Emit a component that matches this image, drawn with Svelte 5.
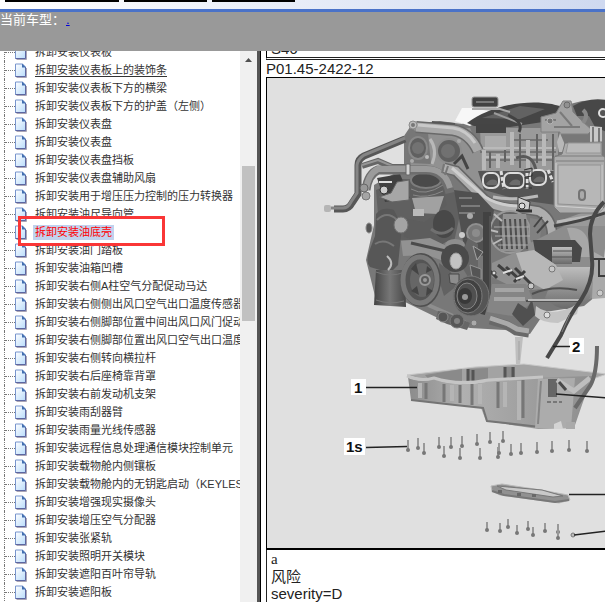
<script>
  const prefix = '拆卸安装';
  const items = [
    '仪表板', '仪表板上的装饰条', '仪表板下方的横梁', '仪表板下方的护盖（左侧）',
    '仪表盘', '仪表盘', '仪表盘挡板', '仪表盘辅助风扇', '用于增压压力控制的压力转换器',
    '油尺导向管', '油底壳', '油门踏板', '油箱凹槽', '右侧A柱空气分配促动马达',
    '右侧侧出风口空气出口温度传感器', '右侧脚部位置中间出风口风门促动马达',
    '右侧脚部位置出风口空气出口温度传感器', '右侧转向横拉杆', '右后座椅靠背罩',
    '右前发动机支架', '雨刮器臂', '雨量光线传感器', '远程信息处理通信模块控制单元',
    '载物舱内侧镶板', '载物舱内的无钥匙启动（KEYLESS-GO）', '增强现实摄像头',
    '增压空气分配器', '张紧轨', '照明开关模块', '遮阳百叶帘导轨', '遮阳板'
  ];
  const hovered = 1;
  const selected = 10;

  const panBolts = [
    [408, 450], [418, 448], [424, 453], [439, 447], [444, 456], [451, 447], [460, 458],
    [462, 446], [477, 444], [480, 458], [490, 442], [498, 457], [503, 441], [499, 453],
    [511, 454], [521, 453], [537, 452], [552, 451], [569, 450], [587, 451]
  ];
  const coverBolts = [
    [487, 530], [500, 531], [508, 527], [517, 533], [528, 529], [533, 535], [545, 531], [558, 532], [558, 538]
  ];
  const ports = [[491, 181, 8], [514, 181, 10], [538, 178, 8]];
  const fins = [500, 505, 510, 515, 520, 525];
</script>

<div class="page">
  <nav class="strip" aria-label="主菜单">
    <a class="tab first" href="#home" aria-label="首页"></a>
    <a class="tab second" href="#data" aria-label="资料"></a>
    <a class="tab third" href="#help" aria-label="帮助"></a>
  </nav>
  <header>当前车型：<a href="#model">.</a></header>

  <div class="body">
    <aside>
      <ul class="tree">
        {#each items as item, i}
          <li>
            <svg class="doc" viewBox="0 0 12 15" aria-hidden="true">
              <defs>
                <linearGradient id="paper" x1="0" y1="0" x2="1" y2="1">
                  <stop offset="0" stop-color="#fff" /><stop offset="1" stop-color="#b9dcfb" />
                </linearGradient>
              </defs>
              <path d="M1.5 14.5H11.5V5" fill="none" stroke="#aaa5b5" />
              <path d="M.5 1H7.5L10.5 4V13.5H.5Z" fill="url(#paper)" stroke="#7895cd" />
              <path d="M.5 13.5H10.5V4" fill="none" stroke="#5c67a2" />
              <path d="M7 .5L11 4.5H7Z" fill="#426eb0" />
            </svg>
            <a href="#doc-{i}" class:hovered={i === hovered} class:selected={i === selected}>{prefix}{item}</a>
          </li>
        {/each}
      </ul>
      <div class="scrollbar" aria-hidden="true">
        <svg viewBox="0 0 17 17"><path d="M5 11L8.500 7L12 11Z" fill="#505050" /></svg>
        <div class="thumb"></div>
      </div>
      <div class="marker"></div>
    </aside>

    <main>
      <div class="model"><span>S46</span></div>
      <h1>P01.45-2422-12</h1>
      <figure>
        <svg class="art" viewBox="267 78 340 470" role="img" aria-label="油底壳">
          <defs>
            <linearGradient id="metal" x1="0" y1="0" x2="0" y2="1">
              <stop offset="0" stop-color="#bdbdbd" /><stop offset="1" stop-color="#6a6a6a" />
            </linearGradient>
            <linearGradient id="dark" x1="0" y1="0" x2="1" y2="0">
              <stop offset="0" stop-color="#444" /><stop offset=".5" stop-color="#777" /><stop offset="1" stop-color="#484848" />
            </linearGradient>
            <linearGradient id="pan" x1="0" y1="0" x2="1" y2="0">
              <stop offset="0" stop-color="#8b8b8b" /><stop offset=".3" stop-color="#b0b0b0" /><stop offset="1" stop-color="#8e8e8e" />
            </linearGradient>
          </defs>

          <!-- block silhouette -->
          <path d="M404 136L412 124L440 121L462 124L482 112L535 103L562 106L582 101L607 100V200L600 260L596 296L584 306L545 312L530 334L505 330L470 328L442 320L405 302L376 300L366 260L374 225V185L404 168Z" fill="#787878" />
          <path d="M414 128H470L484 160V190L450 170H410Z" fill="#919191" />
          <path d="M480 128H558V175H482Z" fill="#9a9a9a" />
          <path d="M485 136H506V150H485Z" fill="#acacac" />
          <path d="M480 152H556M482 160H560M510 140H548" stroke="#747474" stroke-width="2" />
          <path d="M478 148H556M484 157H558" stroke="#bababa" stroke-width="2" />
          <path d="M484 150V170M498 154V168M512 132V165M528 140V168M544 134V166" stroke="#b9b9b9" stroke-width="4" />
          <path d="M490 152V168M505 150V162M520 134V168M537 134V163M553 134V170" stroke="#626262" stroke-width="2" />
          <path d="M516 158Q532 152 536 170" fill="none" stroke="#595959" stroke-width="3" />

          <!-- upper intake and oil filler -->
          <path d="M455 121L462 108L476 108L494 113L470 126Z" fill="#f7f7f7" />
          <path d="M467 123C490 106 525 99 552 104L565 108L556 120L510 127L474 126Z" fill="#454545" />
          <path d="M482 118L520 106L545 109L520 119Z" fill="#626262" />
          <path d="M494 113L522 124" stroke="#9b9b9b" stroke-width="2" />
          <rect x="472" y="97" width="26" height="10" rx="2" fill="#424242" stroke="#999" />
          <path d="M476 102H494" stroke="#777" stroke-width="2" />
          <path d="M472 109H500L510 112" stroke="#aaa" stroke-width="2" fill="none" />
          <path d="M476 124H506V133H476Z" fill="#444" />
          <path d="M508 115Q524 122 519 132" fill="none" stroke="#424242" stroke-width="3" />
          <path d="M541 117L556 113L563 101H571L573 112L583 122L592 130L588 134H560V132H541Z" fill="#a3a3a3" stroke="#808080" />
          <path d="M545 120H556M560 112L572 126M554 127H580" stroke="#7a7a7a" stroke-width="2" />
          <circle cx="567" cy="105" r="3" fill="#919191" stroke="#6a6a6a" />
          <circle cx="550" cy="121" r="3" fill="#777" stroke="#b5b5b5" />
          <path d="M573 106Q588 97 607 100V132L595 127L589 116L577 116Z" fill="#484848" />
          <path d="M583 110Q589 115 583 123" fill="none" stroke="#888" stroke-width="4" />
          <circle cx="603" cy="113" r="4" fill="#555" stroke="#e2e2e2" stroke-width="2" />
          <path d="M590 126L602 127V146H590Z" fill="#c8c8c8" /><path d="M593 127V144M599 128V146" stroke="#777" stroke-width="2" />

          <!-- camshaft adjusters -->
          <path d="M406 136L412 130L428 133L431 164L408 163Z" fill="#777" />
          <ellipse cx="418" cy="148" rx="9" ry="11" fill="#606060" stroke="#898989" stroke-width="2" />
          <circle cx="418" cy="148" r="6" fill="#727272" />
          <circle cx="449" cy="151" r="12" fill="#606060" stroke="#8d8d8d" stroke-width="2" />
          <circle cx="448" cy="151" r="7" fill="#717171" />
          <path d="M430 139Q438 150 432 164" fill="none" stroke="#b8b8b8" stroke-width="3" />
          <path d="M454 164L462 156L468 169" fill="none" stroke="#444" stroke-width="3" />
          <circle cx="412" cy="161" r="2" fill="#aaa" /><circle cx="427" cy="157" r="2" fill="#bbb" /><circle cx="459" cy="141" r="2" fill="#aaa" />
          <path d="M416 127L453 130Q470 133 478 151" fill="none" stroke="#696969" stroke-width="12" />
          <path d="M416 127L453 130Q470 133 478 151" fill="none" stroke="#a9a9a9" stroke-width="9" />
          <path d="M418 125L453 128Q467 130 475 143" fill="none" stroke="#c9c9c9" stroke-width="3" />
          <path d="M432 122L455 124" stroke="#575757" stroke-width="2" />
          <circle cx="413" cy="125" r="4" fill="#bbb" stroke="#8b8b8b" /><circle cx="413" cy="125" r="2" fill="#777" />

          <!-- inlet ports -->
          <path d="M478 171H556V205L520 200L484 190Z" fill="#555" />
          {#each ports as [x, y, w]}
            <rect x={x - w} y={y - 8} width={w * 2} height="15" rx="6" fill="#4e4e4e" stroke="#dedede" stroke-width="2" />
            <path d="M{x - 5} {y + 3}Q{x} {y - 4} {x + 6} {y}V{y + 4}H{x - 3}Z" fill="#6c6c6c" />
          {/each}
          <path d="M501 171L504 189M527 173V189M548 170L553 182" stroke="#dedede" stroke-width="3" stroke-dasharray="4 2" />
          <path d="M524 170L532 168V176L525 177V188H532" fill="none" stroke="#2f2f2f" />

          <!-- control unit -->
          <path d="M556 222L607 204V228L590 226L557 226Z" fill="#999" />
          <path d="M560 133L568 152H559L557 142Z" fill="#b8b8b8" />
          <path d="M565 143L602 142V155L605 157V205L600 213L560 213L554 207V157L562 154Z" fill="#acacac" stroke="#777" />
          <path d="M568 143H601V153H566Z" fill="#bababa" stroke="#969696" />
          <path d="M555 156H604M556 161H604" stroke="#7c7c7c" fill="none" />
          <path d="M558 165H601V206L558 204Z" fill="#b7b7b7" stroke="#929292" />
          <path d="M556 163V206L602 209V165" fill="none" stroke="#d0d0d0" />
          <rect x="579" y="190" width="6" height="10" rx="3" fill="#aaa" stroke="#747474" stroke-width="2" />

          <!-- thermostat, filter and hoses on the left -->
          <path d="M376 190L402 179L450 180L461 210L454 242L380 239Z" fill="#606060" />
          <path d="M377 178L400 174L410 198L385 202Z" fill="#404040" />
          <path d="M379 182H392" stroke="#ddd" stroke-width="2" />
          <path d="M379 197L391 193L397 182L409 180V200L392 202Z" fill="#a6a6a6" stroke="#646464" />
          <circle cx="384" cy="190" r="4" fill="#ccc" stroke="#333" />
          <path d="M409 181H441L447 205L437 212H411Z" fill="#5e5e5e" />
          <ellipse cx="426" cy="180" rx="15" ry="8" fill="#4a4a4a" stroke="#7d7d7d" stroke-width="2" />
          <path d="M411 189Q425 197 443 185M413 195Q427 199 443 191" fill="none" stroke="#898989" />
          <path d="M412 198L444 196L438 214L416 213Z" fill="#a1a1a1" />
          <path d="M334 209H343Q349 209 352 203L358 194V165Q358 159 364 156L405 139" fill="none" stroke="#575757" stroke-width="7" />
          <path d="M331 208H343Q348 208 351 202L357 193V165Q358 159 364 155L405 138" fill="none" stroke="#858585" stroke-width="3" />
          <rect x="324" y="205" width="7" height="7" rx="2" fill="#b5b5b5" />
          <path d="M362 166L378 161L392 167H407" fill="none" stroke="#666" stroke-width="6" />
          <path d="M362 165L378 160L392 166H407" fill="none" stroke="#959595" stroke-width="2" />
          <path d="M366 190Q368 174 378 170H426Q445 170 450 193" fill="none" stroke="#6e6e6e" stroke-width="9" />
          <path d="M366 190Q368 174 378 169H426Q445 169 450 188" fill="none" stroke="#9b9b9b" stroke-width="6" />
          <rect x="406" y="164" width="4" height="11" rx="1" fill="#d4d4d4" stroke="#666" />
          <circle cx="364" cy="188" r="4" fill="#999" stroke="#666" /><circle cx="366" cy="196" r="4" fill="#a5a5a5" stroke="#777" />
          <path d="M444 168L456 171L485 200Q499 210 525 209L538 211Q553 218 552 238" fill="none" stroke="#666" stroke-width="11" />
          <path d="M444 168L456 171L485 200Q499 210 525 209L538 211Q553 218 552 238" fill="none" stroke="#aeaeae" stroke-width="8" />
          <path d="M452 168L485 197Q499 206 520 206" fill="none" stroke="#cecece" stroke-width="3" />
          <path d="M444 164L442 173M448 166L445 175" stroke="#777" stroke-width="2" />
          <path d="M493 197Q515 201 538 196" stroke="#bababa" stroke-width="3" fill="none" />
          <path d="M518 197L530 202L529 210L518 210Z" fill="#cecece" stroke="#383838" /><circle cx="522" cy="206" r="3" fill="#ddd" stroke="#333" />
          <path d="M516 211H532" stroke="#333" stroke-width="3" />

          <!-- turbo inlet at far left -->
          <path d="M376 214Q382 206 394 210L402 226L398 265L390 273L370 267Q365 262 370 249L375 236Z" fill="#575757" />
          <path d="M377 220Q387 210 397 220M375 244Q384 238 394 246" fill="none" stroke="#777" stroke-width="2" />
          <ellipse cx="369" cy="228" rx="3" ry="5" fill="#555" stroke="#888" />
          <path d="M376 270H405L406 307L374 305Z" fill="url(#dark)" />
          <path d="M376 272Q390 278 405 272M376 300Q390 305 404 301" fill="none" stroke="#777" />
          <path d="M387 256Q395 263 388 270" fill="none" stroke="#bbb" stroke-width="2" />

          <!-- central housings -->
          <path d="M403 218L424 222L441 211L452 217L452 238L438 247L404 237Z" fill="#5d5d5d" />
          <ellipse cx="401" cy="225" rx="7" ry="8" fill="#a4a4a4" stroke="#717171" />
          <path d="M413 209H424V216H413Z" fill="#bbb" />
          <ellipse cx="444" cy="224" rx="11" ry="14" fill="#484848" />
          <path d="M431 229Q442 238 453 228" fill="none" stroke="#707070" stroke-width="3" />
          <path d="M454 190L478 193L494 210L486 255L466 258Z" fill="#505050" />
          <path d="M459 198H472M461 206H480M459 213H475" stroke="#7b7b7b" stroke-width="2" />
          <circle cx="476" cy="233" r="9" fill="#777" stroke="#8f8f8f" stroke-width="2" /><circle cx="476" cy="233" r="4" fill="#8c8c8c" />
          <circle cx="462" cy="235" r="3" fill="#ccc" /><circle cx="470" cy="216" r="3" fill="#aaa" />
          <path d="M401 241L430 238L455 250L449 263L427 255L403 256Z" fill="#929292" />
          <path d="M411 243L450 252" stroke="#4b4b4b" stroke-width="3" />
          <ellipse cx="455" cy="245" rx="10" ry="6" fill="#8e8e8e" />

          <!-- alternator -->
          <ellipse cx="510" cy="232" rx="20" ry="21" fill="#636363" stroke="#999" stroke-width="2" />
          <path d="M503 214L526 214L531 243L520 252L500 251Z" fill="#929292" />
          {#each fins as x}
            <path d="M{x} 219L{x + 2} 249" stroke="#4f4f4f" stroke-width="2" />
          {/each}
          <path d="M494 227H529M495 236H530M498 245H528" stroke="#aaa" />
          <path d="M494 214L502 221M490 230L498 232M493 244L502 239" stroke="#bbb" stroke-width="2" />
          <path d="M530 218L542 220L540 240H530Z" fill="#818181" /><path d="M537 233L548 221M534 227L542 217" stroke="#444" stroke-width="2" />

          <!-- starter and gearbox -->
          <path d="M564 226H607L604 260L600 296L586 300L560 298L530 280L528 244Z" fill="#8d8d8d" />
          <path d="M567 228Q583 226 588 240L594 257H576Z" fill="#a7a7a7" />
          <path d="M533 240H575L582 248L580 262H551L535 251Z" fill="#484848" />
          <path d="M552 247H572V264H552Z" fill="url(#metal)" />
          <path d="M553 251H572M552 257H573" stroke="#505050" />
          <path d="M557 267H594L590 298Q566 320 545 298Z" fill="url(#metal)" />
          <path d="M492 263L516 252H532L556 265L552 288L521 291L492 277Z" fill="#909090" />
          <path d="M516 253L534 250L556 265L563 280L545 290L525 279Z" fill="#b7b7b7" />
          <circle cx="552" cy="269" r="3" fill="#c8c8c8" stroke="#777" />
          <path d="M498 265L510 275M506 267L520 280M515 268L532 285M525 271L514 282M490 271L497 278" stroke="#3f3f3f" stroke-width="3" />
          <path d="M503 273L512 270M516 279L524 276" stroke="#ddd" stroke-width="2" />
          <circle cx="494" cy="273" r="2" fill="#ddd" stroke="#444" /><circle cx="531" cy="286" r="3" fill="#c8c8c8" stroke="#555" />
          <path d="M492 284H526L534 302L512 316L487 312Z" fill="#858585" />
          <path d="M495 290H524M494 299H525" stroke="#a5a5a5" stroke-width="4" />
          <path d="M512 314L518 303L527 309L532 299L535 315L523 326Z" fill="#505050" />
          <path d="M526 301H582M532 294Q552 285 577 290" stroke="#505050" stroke-width="2" fill="none" />
          <path d="M528 300H582" stroke="#bababa" stroke-width="2" />
          <path d="M536 306Q550 317 572 307L580 301L577 314L558 323Q542 323 535 316Z" fill="#c4c4c4" />
          <circle cx="547" cy="315" r="3" fill="#ddd" stroke="#777" />
          <path d="M594 252L605 258V298L592 299Z" fill="#aaa" />
          <path d="M592 259H607M599 260V276H607" stroke="#3d3d3d" stroke-width="2" fill="none" />
          <circle cx="600" cy="293" r="3" fill="#ccc" stroke="#888" />
          <path d="M557 222Q583 217 598 216L607 207" fill="none" stroke="#b9b9b9" stroke-width="3" />
          <path d="M554 226Q583 221 605 213" fill="none" stroke="#444" stroke-width="3" />

          <!-- belt drive -->
          <path d="M487 212V292L481 314" fill="none" stroke="#424242" stroke-width="8" />
          <path d="M490 216V294" stroke="#606060" />
          <path d="M428 305L451 315L466 323" fill="none" stroke="#8e8e8e" stroke-width="4" />
          <path d="M468 238L478 244V282L468 277L459 262Z" fill="#666" /><path d="M473 246L483 252L477 260Z" fill="#555" stroke="#a2a2a2" />
          <path d="M470 265L481 269V279L472 276Z" fill="#555" stroke="#959595" />
          <circle cx="455" cy="258" r="14" fill="#4a4a4a" /><ellipse cx="456" cy="261" rx="6" ry="8" fill="#c3c3c3" stroke="#9d9d9d" />
          <path d="M439 263L450 271L458 285L444 296L440 283Z" fill="#626262" />
          <path d="M449 274H459V285L450 283Z" fill="#8d8d8d" stroke="#494949" />
          <ellipse cx="421" cy="280" rx="20" ry="27" fill="#4f4f4f" />
          <ellipse cx="420" cy="280" rx="17" ry="23" fill="#555" stroke="#797979" stroke-width="5" />
          <ellipse cx="422" cy="280" rx="12" ry="17" fill="#666" />
          <path d="M411 269L419 275L416 263ZM427 266L426 273L432 270ZM411 291L417 286L419 295ZM427 287L433 291L426 296Z" fill="#444" />
          <circle cx="425" cy="280" r="5" fill="#5b5b5b" stroke="#999" stroke-width="2" /><circle cx="425" cy="280" r="2" fill="#999" />
          <ellipse cx="471" cy="296" rx="18" ry="20" fill="#555" stroke="#777" />
          <ellipse cx="468" cy="296" rx="14" ry="17" fill="#414141" stroke="#7b7b7b" />
          <ellipse cx="467" cy="296" rx="10" ry="13" fill="#505050" stroke="#858585" />
          <ellipse cx="465" cy="296" rx="7" ry="8" fill="#393939" /><circle cx="465" cy="297" r="3" fill="#999" />
          <path d="M438 311L445 312L470 323L467 330L447 324L436 319Z" fill="#666" />
          <circle cx="443" cy="317" r="5" fill="#555" stroke="#888" /><circle cx="457" cy="321" r="7" fill="#575757" stroke="#797979" />
          <circle cx="457" cy="321" r="3" fill="#828282" /><circle cx="474" cy="323" r="3" fill="#aaa" stroke="#777" />
          <path d="M490 320L507 325L516 331L529 333" fill="none" stroke="#696969" stroke-width="9" />
          <path d="M490 318L508 324L517 329L529 331" fill="none" stroke="#aaa" stroke-width="5" />
          <path d="M515 337H523L520 365H516Z" fill="#bebebe" /><path d="M519 341V360" stroke="#a2a2a2" />
          <path d="M604 202Q590 216 590 234L592 260Q594 280 581 300Q570 314 561 335L547 358" fill="none" stroke="#484848" stroke-width="4" />
          <path d="M570 314L562 332" stroke="#808080" />

          <!-- oil pan -->
          <path d="M407 375L475 367L524 364L607 374L584 382L486 382L424 380Z" fill="#a3a3a3" stroke="#c8c8c8" />
          <path d="M425 375L462 369V381H430ZM467 369L488 368V381H467ZM505 367L515 367V379H505Z" fill="#8a8a8a" />
          <path d="M468 369V382M473 370V383M505 367V378M513 367V377" stroke="#555" stroke-width="3" />
          <path d="M408 377Q418 383 434 379Q456 387 486 382L525 378L592 376L574 428L538 429L486 421L481 408L411 400Z" fill="url(#pan)" />
          <path d="M420 383V398M452 385V401M480 384V404M505 382V407M519 381V420" stroke="#b5b5b5" stroke-width="4" />
          <path d="M426 383V399M444 384V402M460 385V403M472 384V405M498 382V408M523 380V418" stroke="#777" stroke-width="3" />
          <path d="M411 400L455 405L483 408L487 421L540 427" fill="none" stroke="#747474" stroke-width="2" />
          <path d="M407 376Q420 382 434 378Q458 386 488 380L543 377" fill="none" stroke="#c5c5c5" stroke-width="3" />
          <path d="M538 379L575 378L571 428L535 428Z" fill="#acacac" />
          <path d="M541 381L538 424" stroke="#858585" stroke-width="2" /><path d="M548 379H557V397H548Z" fill="#666" />
          <path d="M547 402H562" stroke="#777" stroke-width="2" stroke-dasharray="4 2" />
          <path d="M557 380L574 391L590 378" fill="none" stroke="#bebebe" stroke-width="5" />
          <path d="M559 382L566 390" fill="none" stroke="#484848" stroke-width="3" />
          <path d="M597 346Q597 374 590 386L575 408" fill="none" stroke="#696969" stroke-width="4" />
          <path d="M554 424L561 421L563 429L554 429Z" fill="#d4d4d4" /><path d="M566 422H575V429H566Z" fill="#aaa" />

          <!-- lower cover -->
          <path d="M491 486L502 484L541 490L568 495L570 500L559 503L500 495L492 491Z" fill="#919191" stroke="#bbb" />
          <path d="M497 486L542 490L563 496L553 497L506 490Z" fill="#c9c9c9" stroke="#787878" />
          <path d="M492 491L504 495L555 502L569 500" fill="none" stroke="#777" stroke-width="2" />
          <path d="M500 490V493M519 493V496M534 494V497" stroke="#686868" stroke-width="4" />

          {#each [...panBolts, ...coverBolts] as [x, y], i}
            <path d="M{x} {i < 20 ? y - 10 : y - 8}V{y}" stroke="#999" stroke-width="2" />
            <ellipse cx={x} cy={y} rx="2" ry="2" fill="#777" />
          {/each}
          <circle cx="573" cy="535" r="2" fill="#bbb" stroke="#777" />

          <!-- callouts -->
          <path d="M351 379H366V395H351ZM344 438H365V455H344ZM569 338H584V354H569Z" fill="#fff" />
          <path d="M366 387.500H417M366 447.500L407 446.500M553 346.500H570M556 394L607 398M569 494.500H607M574 535L607 531" fill="none" stroke="#222" stroke-width="1.500" />
          <g class="callout"><text x="354" y="393">1</text><text x="346" y="452">1s</text><text x="572" y="352">2</text></g>
        </svg>
      </figure>
      <section>
        <p class="serif">a</p>
        <p>风险</p>
        <p>severity=D</p>
      </section>
    </main>
  </div>
</div>

<style>
  :global(body) { margin: 0; background: #fff; }
  .page {
    height: 100vh;
    display: flex;
    flex-direction: column;
    overflow: hidden;
    font-family: "Liberation Sans", "Noto Sans CJK SC", sans-serif;
    color: #222;
  }
  .strip {
    flex: none;
    box-sizing: border-box;
    height: 12px;
    display: flex;
    gap: 5px;
    padding-left: 5px;
    background: linear-gradient(90deg, #fff, #cfd9f0);
    border-bottom: 3px solid #4a72c8;
  }
  .tab { height: 2px; background: #000; }
  .first { width: 114px; }
  .second { width: 83px; }
  .third { width: 83px; }
  header {
    flex: none;
    box-sizing: border-box;
    height: 39px;
    background: #999;
    color: #fff;
    font-size: 13px;
    line-height: 15px;
  }
  header a { margin-left: 1px; color: #0000d8; }
  .body { flex: 1; min-height: 0; display: flex; overflow: hidden; }
  aside {
    position: relative;
    flex: none;
    width: 257px;
    display: flex;
    border-right: 3px solid #555;
    box-shadow: 1px 0 #000;
  }
  .tree {
    flex: 1;
    min-width: 0;
    overflow: hidden;
    list-style: none;
    margin: -8px 0 0;
    padding: 0 0 0 4px;
  }
  li {
    display: flex;
    align-items: center;
    height: 18px;
    border-left: 1px dotted #777;
    white-space: nowrap;
  }
  li::before { content: ""; width: 10px; flex: none; border-top: 1px dotted #777; }
  .doc { flex: none; width: 12px; height: 15px; margin-right: 6px; }
  li a {
    padding: 0 2px;
    font-size: 11px;
    line-height: 15px;
    color: #333;
    text-decoration: none;
  }
  li a.hovered { text-decoration: underline; text-underline-offset: 2px; }
  li a.selected { background: #c1d2ee; color: #f00; }
  .scrollbar { flex: none; width: 17px; background: #f0f0f0; }
  .scrollbar svg { display: block; width: 17px; height: 17px; }
  .thumb { height: 155px; margin: 98px 2px 0; background: #c1c1c1; }
  .marker {
    position: absolute;
    left: 18px;
    top: 165px;
    width: 141px;
    height: 24px;
    border: 3px solid #fa3636;
    pointer-events: none;
  }
  main {
    flex: 1;
    min-width: 0;
    overflow: hidden;
    padding-left: 6px;
    font-size: 15px;
  }
  .model {
    display: flex;
    align-items: flex-end;
    height: 6px;
    padding-left: 4px;
    overflow: hidden;
    border-left: 1px solid #000;
    border-bottom: 3px double #222;
    line-height: 17px;
  }
  h1 { margin: 0; font-size: 15px; font-weight: 400; line-height: 17px; }
  figure {
    margin: 0;
    overflow: hidden;
    background: #e0e0e0;
    border: solid #000;
    border-width: 1px 0 2px 1px;
  }
  .art { display: block; width: 340px; height: 470px; }
  .callout { font-size: 15px; font-weight: 700; fill: #111; }
  section { border-left: 1px solid #222; padding: 1px 4px 20px; }
  p { margin: 0; line-height: 17px; }
  .serif { font-family: "Liberation Serif", serif; }
</style>
